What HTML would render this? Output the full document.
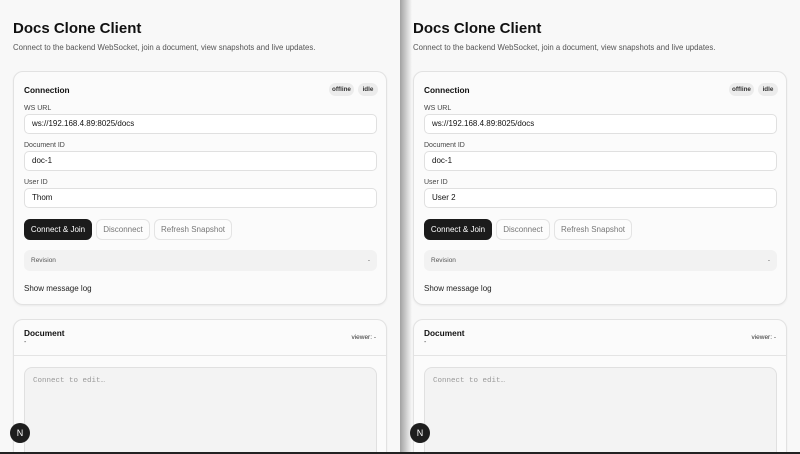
<!DOCTYPE html>
<html><head><style>
*{box-sizing:border-box;margin:0;padding:0}
html,body{width:800px;height:454px;overflow:hidden}
body{background:#222;font-family:"Liberation Sans",sans-serif;position:relative}
.pane{position:absolute;top:0;width:400px;height:452px;background:#f8f8f8;overflow:hidden}
.shadow{position:absolute;left:400px;top:0;width:12px;height:452px;background:linear-gradient(to right,rgba(0,0,0,.35),rgba(0,0,0,0));z-index:5}
h1{position:absolute;left:13px;top:20px;font-size:15px;font-weight:bold;color:#111}
.sub{position:absolute;left:13px;top:43px;font-size:7.8px;color:#555}
.card{position:absolute;left:13px;width:374px;background:#fbfbfb;border:1px solid #e2e2e2;border-radius:10px;box-shadow:0 1px 2px rgba(0,0,0,.06);overflow:hidden}
.t{position:absolute;font-size:8.3px;font-weight:bold;color:#111}
.badge{position:absolute;top:11px;height:13px;border-radius:7px;background:#ececec;font-size:6.3px;font-weight:bold;color:#333;line-height:13px;text-align:center}
.lbl{position:absolute;left:10px;font-size:7px;color:#444}
.inp{position:absolute;left:10px;width:353px;height:20px;border:1px solid #e0e0e0;border-radius:5px;background:#fff;font-size:8px;color:#111;padding-left:7px;line-height:18px}
.btn{position:absolute;top:147px;height:21px;border-radius:6px;font-size:8px;line-height:20px;text-align:center;border:1px solid #e4e4e4;color:#777;background:#fcfcfc}
.btn.d{background:#1b1b1b;color:#fff;border-color:#1b1b1b}
.rev{position:absolute;left:10px;top:178px;width:353px;height:21px;border-radius:6px;background:#f2f2f2;font-size:6.5px;color:#555;line-height:21px;padding:0 7px}
.rev span{float:right}
.log{position:absolute;left:10px;top:212px;font-size:8px;color:#222}
.ta{position:absolute;left:10px;top:47px;width:353px;height:100px;border:1px solid #e0e0e0;border-radius:8px;background:#f3f3f3;font-family:"Liberation Mono",monospace;font-size:7.5px;color:#999;padding:9px 8px}
.n{position:absolute;left:10px;top:423px;width:20px;height:20px;border-radius:50%;background:#1e1e1e;color:#fff;font-size:9px;text-align:center;line-height:20px;z-index:6}
</style></head><body>
<div class="pane" style="left:0">
<h1>Docs Clone Client</h1>
<div class="sub">Connect to the backend WebSocket, join a document, view snapshots and live updates.</div>
<div class="card" style="top:71px;height:234px">
<div class="t" style="left:10px;top:13px">Connection</div>
<div class="badge" style="left:315px;width:25px">offline</div>
<div class="badge" style="left:344px;width:20px">idle</div>
<div class="lbl" style="top:33px">WS URL</div>
<div class="inp" style="top:42px">ws://192.168.4.89:8025/docs</div>
<div class="lbl" style="top:70px">Document ID</div>
<div class="inp" style="top:79px">doc-1</div>
<div class="lbl" style="top:107px">User ID</div>
<div class="inp" style="top:116px">Thom</div>
<div class="btn d" style="left:10px;width:68px">Connect &amp; Join</div>
<div class="btn" style="left:82px;width:54px">Disconnect</div>
<div class="btn" style="left:140px;width:78px">Refresh Snapshot</div>
<div class="rev">Revision<span>-</span></div>
<div class="log">Show message log</div>
</div>
<div class="card" style="top:319px;height:145px">
<div class="t" style="left:10px;top:8px">Document</div>
<div style="position:absolute;left:10px;top:19px;font-size:7px;color:#444">-</div>
<div style="position:absolute;right:10px;top:14px;font-size:6.5px;color:#333">viewer: -</div>
<div style="position:absolute;left:0;right:0;top:35px;border-top:1px solid #e4e4e4"></div>
<div class="ta">Connect to edit…</div>
</div>
</div>
<div class="n">N</div>
<div class="pane" style="left:400px;width:400px">
<h1>Docs Clone Client</h1>
<div class="sub">Connect to the backend WebSocket, join a document, view snapshots and live updates.</div>
<div class="card" style="top:71px;height:234px">
<div class="t" style="left:10px;top:13px">Connection</div>
<div class="badge" style="left:315px;width:25px">offline</div>
<div class="badge" style="left:344px;width:20px">idle</div>
<div class="lbl" style="top:33px">WS URL</div>
<div class="inp" style="top:42px">ws://192.168.4.89:8025/docs</div>
<div class="lbl" style="top:70px">Document ID</div>
<div class="inp" style="top:79px">doc-1</div>
<div class="lbl" style="top:107px">User ID</div>
<div class="inp" style="top:116px">User 2</div>
<div class="btn d" style="left:10px;width:68px">Connect &amp; Join</div>
<div class="btn" style="left:82px;width:54px">Disconnect</div>
<div class="btn" style="left:140px;width:78px">Refresh Snapshot</div>
<div class="rev">Revision<span>-</span></div>
<div class="log">Show message log</div>
</div>
<div class="card" style="top:319px;height:145px">
<div class="t" style="left:10px;top:8px">Document</div>
<div style="position:absolute;left:10px;top:19px;font-size:7px;color:#444">-</div>
<div style="position:absolute;right:10px;top:14px;font-size:6.5px;color:#333">viewer: -</div>
<div style="position:absolute;left:0;right:0;top:35px;border-top:1px solid #e4e4e4"></div>
<div class="ta">Connect to edit…</div>
</div>
</div>
<div class="n" style="left:410px">N</div>
<div class="shadow"></div>
</body></html>
